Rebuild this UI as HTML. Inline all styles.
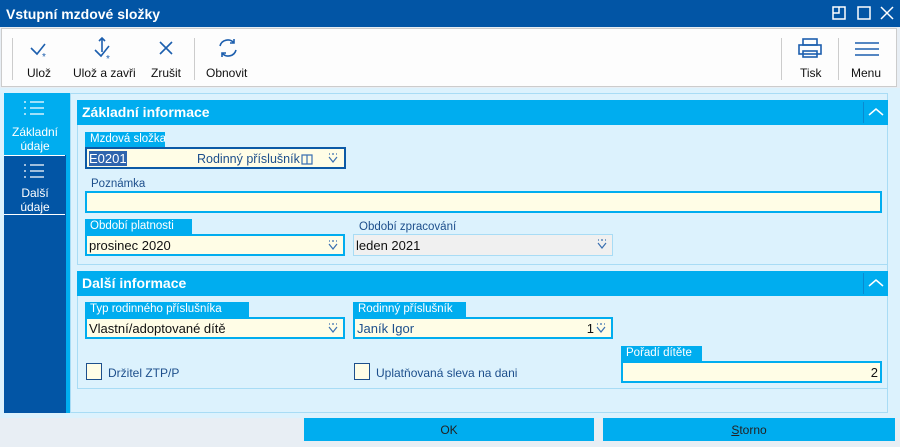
<!DOCTYPE html>
<html><head><meta charset="utf-8"><style>
*{box-sizing:border-box;margin:0;padding:0}
body{width:900px;height:447px;overflow:hidden;background:#e8eef4;font-family:"Liberation Sans",sans-serif;font-size:13px;position:relative}
.a{position:absolute;white-space:nowrap}
.title{left:0;top:0;width:900px;height:27px;background:#0255a5;color:#fff;font-weight:bold;font-size:14px;padding:6px 0 0 6px}
.tb{left:1px;top:28px;width:896px;height:59px;background:#fdfdfd;border:1px solid #ccc}
.sep{width:1px;height:42px;background:#ccc;top:38px}
.tbl{top:66px;font-size:12px;color:#111;text-align:center}
.main{left:70px;top:93px;width:818px;height:320px;background:#dcf2fd;border:1px solid #a8dcf5}
.hdr{background:#00adef;color:#fff;font-weight:bold;font-size:14px;padding:4px 0 0 5px;height:25px}
.sec{border:1px solid #a8dcf5}
.lab{background:#00adef;color:#fff;font-size:11.5px;padding:1px 5px 0;height:15px;overflow:hidden}
.lab2{color:#1d4f8c;font-size:11.5px;padding:1px 6px 0}
.inp{background:#fffde6;border:2px solid #00adef;height:22px;font-size:13px;padding:2px 2px;color:#111}
.dd{position:absolute;right:4px;top:4px}
.cb{width:16px;height:17px;border:1px solid #1d4f8c;background:#fffde6}
.btn{background:#00adef;top:418px;height:23px;text-align:center;padding-top:5px;font-size:12px;color:#222}
</style></head><body>
<div class="a title">Vstupní mzdové složky</div>
<svg class="a" style="left:828px;top:4px" width="72" height="20" fill="none" stroke="#fff" stroke-width="1.5">
<rect x="5" y="3" width="12" height="12"/><path d="M5 9h6V3"/>
<rect x="30" y="3" width="12" height="12"/><path d="M53 3l12 12M65 3l-12 12"/></svg>
<div class="a tb"></div>
<div class="a sep" style="left:12px"></div><div class="a sep" style="left:194px"></div>
<div class="a sep" style="left:781px"></div><div class="a sep" style="left:838px"></div>
<svg class="a" style="left:0;top:36px" width="900" height="30" fill="none" stroke="#1d5fae" stroke-width="1.6">
<path d="M31 12l6 6 8-10"/><text x="42" y="24" font-size="10" fill="#1d5fae" stroke="none">*</text>
<path d="M95 14l6 6 8-10M102 2v14M99 5l3-3 3 3"/><text x="106" y="26" font-size="10" fill="#1d5fae" stroke="none">*</text>
<path d="M160 6l12 12M172 6l-12 12"/>
<path d="M220 10a8 8 0 0 1 14-3M236 14a8 8 0 0 1-14 3M234 3v4h-4M222 21v-4h4"/>
<rect x="799" y="9" width="22" height="9"/><rect x="803" y="3" width="14" height="6"/><rect x="803" y="15" width="14" height="6"/>
<path d="M855 7h24M855 13h24M855 19h24"/></svg>
<div class="a tbl" style="left:27px">Ulož</div>
<div class="a tbl" style="left:73px">Ulož a zavři</div>
<div class="a tbl" style="left:151px">Zrušit</div>
<div class="a tbl" style="left:206px">Obnovit</div>
<div class="a tbl" style="left:800px">Tisk</div>
<div class="a tbl" style="left:851px">Menu</div>
<div class="a" style="left:0;top:88px;width:900px;height:330px;background:#dcf2fd"></div>
<div class="a" style="left:4px;top:93px;width:62px;height:320px;background:#0255a5"></div>
<div class="a" style="left:66px;top:93px;width:4px;height:320px;background:#00adef"></div>
<div class="a" style="left:4px;top:93px;width:62px;height:62px;background:#00adef"></div>
<div class="a" style="left:4px;top:155px;width:61px;height:60px;background:#0255a5;border-top:1px solid #fff;border-bottom:1px solid #fff"></div>
<svg class="a" style="left:20px;top:98px" width="30" height="80" stroke="#fff" stroke-width="1.3"><path d="M4 4h2M10 4h14M4 10h2M10 10h14M4 16h2M10 16h14M4 67h2M10 67h14M4 73h2M10 73h14M4 79h2M10 79h14"/></svg>
<div class="a" style="left:4px;top:125px;width:62px;text-align:center;color:#fff;font-size:12px;line-height:14px">Základní<br>údaje</div>
<div class="a" style="left:4px;top:186px;width:62px;text-align:center;color:#fff;font-size:12px;line-height:14px">Další<br>údaje</div>
<div class="a main"></div>
<div class="a sec" style="left:77px;top:100px;width:811px;height:165px"></div>
<div class="a hdr" style="left:77px;top:100px;width:811px">Základní informace</div>
<div class="a" style="left:863px;top:102px;width:1px;height:21px;background:#0a8ad0"></div>
<svg class="a" style="left:868px;top:106px" width="16" height="12" fill="none" stroke="#fff" stroke-width="1.5"><path d="M1 9l7-6 7 6"/></svg>
<div class="a lab" style="left:85px;top:132px;width:80px">Mzdová složka</div>
<div class="a inp" style="left:85px;top:147px;width:261px;border-color:#0c5aa6"><span style="background:#2f64ad;color:#fff">E0201</span><span style="position:absolute;left:110px;top:3px;font-size:12.5px;color:#1d4f8c">Rodinný příslušník</span>
<svg class="dd" width="40" height="12" fill="none" stroke="#3a6fb0" stroke-width="1.2" style="right:3px"><path d="M1 2h5v9H1zM6 2h5v9H6z"/><path d="M28 4l4 5 4-5M28 1h1M31 1h2M35 1h1" /></svg></div>
<div class="a lab2" style="left:85px;top:177px">Poznámka</div>
<div class="a inp" style="left:85px;top:191px;width:797px"></div>
<div class="a lab" style="left:85px;top:219px;width:107px">Období platnosti</div>
<div class="a inp" style="left:85px;top:234px;width:260px">prosinec 2020<svg class="dd" width="12" height="12" fill="none" stroke="#3a6fb0" stroke-width="1.2"><path d="M2 4l4 5 4-5M2 1h1M5 1h2M9 1h1"/></svg></div>
<div class="a lab2" style="left:353px;top:220px">Období zpracování</div>
<div class="a inp" style="left:353px;top:234px;width:260px;background:#f0f0f0;border:1px solid #a8dcf5;padding-top:3px">leden 2021<svg class="dd" width="12" height="12" fill="none" stroke="#3a6fb0" stroke-width="1.2"><path d="M2 4l4 5 4-5M2 1h1M5 1h2M9 1h1"/></svg></div>
<div class="a sec" style="left:77px;top:271px;width:811px;height:118px"></div>
<div class="a hdr" style="left:77px;top:271px;width:811px">Další informace</div>
<div class="a" style="left:863px;top:273px;width:1px;height:21px;background:#0a8ad0"></div>
<svg class="a" style="left:868px;top:277px" width="16" height="12" fill="none" stroke="#fff" stroke-width="1.5"><path d="M1 9l7-6 7 6"/></svg>
<div class="a lab" style="left:85px;top:302px;width:164px">Typ rodinného příslušníka</div>
<div class="a inp" style="left:85px;top:317px;width:260px">Vlastní/adoptované dítě<svg class="dd" width="12" height="12" fill="none" stroke="#3a6fb0" stroke-width="1.2"><path d="M2 4l4 5 4-5M2 1h1M5 1h2M9 1h1"/></svg></div>
<div class="a lab" style="left:353px;top:302px;width:113px">Rodinný příslušník</div>
<div class="a inp" style="left:353px;top:317px;width:260px;color:#1d4f8c">Janík Igor<span style="position:absolute;right:17px;top:2px;color:#111">1</span><svg class="dd" width="12" height="12" fill="none" stroke="#3a6fb0" stroke-width="1.2"><path d="M2 4l4 5 4-5M2 1h1M5 1h2M9 1h1"/></svg></div>
<div class="a cb" style="left:86px;top:363px"></div>
<div class="a" style="left:108px;top:366px;font-size:12px;color:#1d4f8c">Držitel ZTP/P</div>
<div class="a cb" style="left:354px;top:363px"></div>
<div class="a" style="left:376px;top:366px;font-size:12px;color:#1d4f8c">Uplatňovaná sleva na dani</div>
<div class="a lab" style="left:621px;top:346px;width:81px">Pořadí dítěte</div>
<div class="a inp" style="left:621px;top:361px;width:261px;text-align:right">2</div>
<div class="a btn" style="left:304px;width:290px">OK</div>
<div class="a btn" style="left:603px;width:292px"><u>S</u>torno</div>
</body></html>
